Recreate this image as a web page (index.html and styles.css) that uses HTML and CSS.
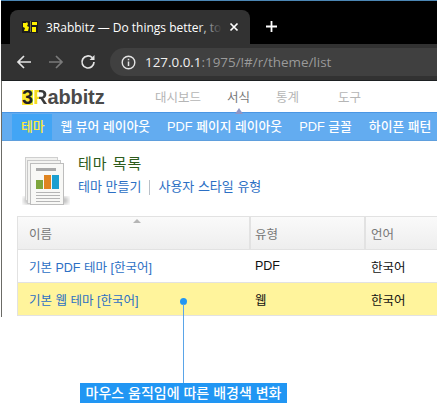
FILE: index.html
```html
<!DOCTYPE html>
<html lang="ko">
<head>
  <meta charset="UTF-8">
  <title>테마 목록</title>
  <link rel="stylesheet" href="styles.css">
</head>
<body>
  <div class="browser">
    <div class="tabstrip">
      <div class="tab">
        <svg class="favicon" width="16" height="12" viewBox="0 0 16 12">
          <rect x="0" y="0" width="16" height="12" fill="#1c1c1c"/>
          <path d="M1 2h3l1-1 1 2-1 2 2 1-1 4H2l1-3-2-1z" fill="#fff200"/>
          <rect x="8" y="0" width="1" height="11" fill="#77774a"/>
          <rect x="10" y="1" width="5" height="3" fill="#fff200"/>
          <rect x="10" y="6" width="4" height="5" fill="#fff200"/>
        </svg>
        <span class="tab-title">3Rabbitz — Do things better, to</span>
        <svg class="tab-close" width="10" height="10" viewBox="0 0 10 10">
          <path d="M1.500 1.500l7 7M8.500 1.500l-7 7" stroke="#fff" stroke-width="1.700" fill="none"/>
        </svg>
      </div>
      <svg class="new-tab" width="13" height="13" viewBox="0 0 13 13">
        <path d="M6.500 1v11M1 6.500h11" stroke="#fff" stroke-width="1.800" fill="none"/>
      </svg>
    </div>
    <div class="toolbar">
      <svg class="tool-icon" width="16" height="16" viewBox="0 0 16 16">
        <path d="M15 8H2M8 2L2 8l6 6" stroke="#e4e4e4" stroke-width="1.700" fill="none"/>
      </svg>
      <svg class="tool-icon" width="16" height="16" viewBox="0 0 16 16">
        <path d="M1 8h13M8 2l6 6-6 6" stroke="#7a7a7a" stroke-width="1.700" fill="none"/>
      </svg>
      <svg class="tool-icon" width="16" height="16" viewBox="0 0 16 16">
        <path d="M14 8a6 6 0 1 1-1.800-4.300" stroke="#e4e4e4" stroke-width="1.700" fill="none"/>
        <path d="M14.500 1v5h-5z" fill="#e4e4e4"/>
      </svg>
      <div class="omnibox">
        <svg class="info-icon" width="15" height="15" viewBox="0 0 15 15">
          <circle cx="7.500" cy="7.500" r="6.300" stroke="#e4e4e4" stroke-width="1.400" fill="none"/>
          <path d="M7.500 6.500v4.500M7.500 3.800v1.500" stroke="#e4e4e4" stroke-width="1.500" fill="none"/>
        </svg>
        <span class="url-host">127.0.0.1</span><span class="url-rest">:1975/!#/r/theme/list</span>
      </div>
    </div>

    <div class="app">
      <div class="topbar">
        <div class="logo"><span class="logo-three">3</span><span class="logo-r">R</span>abbitz</div>
        <a class="top-menu">대시보드</a>
        <a class="top-menu active">서식</a>
        <a class="top-menu">통계</a>
        <a class="top-menu">도구</a>
      </div>
      <div class="subnav">
        <a class="subnav-item active">테마</a>
        <a class="subnav-item">웹 뷰어 레이아웃</a>
        <a class="subnav-item">PDF 페이지 레이아웃</a>
        <a class="subnav-item">PDF 글꼴</a>
        <a class="subnav-item">하이픈 패턴</a>
      </div>
      <div class="page-head">
        <svg class="page-icon" width="48" height="52" viewBox="0 0 48 52">
          <defs>
            <filter id="soft"><feGaussianBlur stdDeviation="2"/></filter>
          </defs>
          <rect x="2" y="42" width="44" height="7" fill="#bbb" filter="url(#soft)"/>
          <rect x="3.500" y="2.500" width="32" height="43" fill="#f1f1ef" stroke="#cfcfcf"/>
          <rect x="5.500" y="5.500" width="33" height="43" fill="#f3f3f1" stroke="#c8c8c8"/>
          <rect x="8.500" y="8.500" width="33" height="41" fill="#f8f8f6" stroke="#bdbdbd"/>
          <rect x="14" y="13" width="20" height="3" fill="#a9a9a9"/>
          <rect x="14" y="25" width="7" height="9" fill="#7ea63d"/>
          <rect x="22" y="20" width="7" height="14" fill="#df8420"/>
          <rect x="30" y="20" width="7" height="14" fill="#1c9fd0"/>
          <path d="M14 37.500h24M14 40.500h24M14 43.500h24M14 46.500h24" stroke="#b5b5b5"/>
        </svg>
        <div class="page-info">
          <h1 class="page-title">테마 목록</h1>
          <div class="page-links">
            <a>테마 만들기</a>
            <span class="link-sep"></span>
            <a>사용자 스타일 유형</a>
          </div>
        </div>
      </div>
      <div class="theme-table">
        <div class="table-row table-head">
          <div class="cell name sorted">이름</div>
          <div class="cell type">유형</div>
          <div class="cell lang">언어</div>
        </div>
        <div class="table-row">
          <div class="cell name"><a>기본 PDF 테마 [한국어]</a></div>
          <div class="cell type">PDF</div>
          <div class="cell lang">한국어</div>
        </div>
        <div class="table-row hover">
          <div class="cell name"><a>기본 웹 테마 [한국어]</a></div>
          <div class="cell type">웹</div>
          <div class="cell lang">한국어</div>
        </div>
      </div>
    </div>

    <div class="callout-dot"></div>
    <div class="callout-line"></div>
    <div class="callout-label">마우스 움직임에 따른 배경색 변화</div>
  </div>
</body>
</html>
```

FILE: styles.css
```css
* {
  box-sizing: border-box;
}

html, body {
  margin: 0;
  padding: 0;
  background-color: white;
}

body {
  font-family: "Liberation Sans", "Noto Sans CJK KR", sans-serif;
  font-size: 12px;
  width: 437px;
  height: 403px;
  overflow: hidden;
}

.browser {
  position: relative;
  width: 437px;
  height: 403px;
  overflow: hidden;
}

.tabstrip {
  height: 44px;
  margin-left: 1px;
  background-color: #000;
  border-top: 1px solid #4b86b4;
  padding: 9px 0 0 9px;
  display: flex;
  align-items: flex-start;
}

.tab {
  width: 240px;
  height: 34px;
  background-color: #323232;
  border-radius: 8px 8px 0 0;
  display: flex;
  align-items: center;
  padding: 0 0 0 12px;
  color: #fff;
  font-family: "Open Sans", "Liberation Sans", sans-serif;
  font-size: 12px;
}

.favicon {
  flex: none;
}

.tab-title {
  position: relative;
  margin-left: 8px;
  width: 176px;
  white-space: nowrap;
  overflow: hidden;
}

.tab-title::after {
  content: "";
  position: absolute;
  right: 0;
  top: 0;
  width: 24px;
  height: 100%;
  background: linear-gradient(to right, rgba(50, 50, 50, 0), #323232);
}

.tab-close {
  margin-left: 7px;
  flex: none;
}

.new-tab {
  margin: 10px 0 0 15px;
}

.toolbar {
  height: 36px;
  margin-left: 1px;
  background-color: #323232;
  display: flex;
  align-items: center;
  padding: 0 0 0 15px;
  gap: 16px;
}

.tool-icon {
  flex: none;
}

.omnibox {
  flex: 1;
  height: 28px;
  margin-left: -2px;
  background-color: #404040;
  border-radius: 14px 0 0 14px;
  display: flex;
  align-items: center;
  padding-left: 11px;
  font-family: "Open Sans", "Liberation Sans", sans-serif;
  font-size: 13.4px;
}

.info-icon {
  margin-right: 9px;
}

.url-host {
  color: #f0f0f0;
}

.url-rest {
  color: #9a9a9a;
}

.app {
  height: 237px;
  margin-left: 1px;
  border-left: 1px solid #6b6b66;
  border-top: 1px solid #1d2022;
}

.topbar {
  height: 31px;
  display: flex;
  align-items: center;
  position: relative;
}

.logo {
  font-family: "Liberation Sans", sans-serif;
  font-weight: bold;
  font-size: 20px;
  color: #4a4a4a;
  margin: 1px 0 0 20px;
  width: 133px;
  letter-spacing: -0.1px;
}

.logo-three {
  background: linear-gradient(to bottom, #ffe92e, #ffe92e) no-repeat 0 4px / 100% 15px;
  color: #222;
}

.logo-r {
  background: linear-gradient(to right, #f5dc20 45%, #3a3a3a 45%);
  -webkit-background-clip: text;
  background-clip: text;
  color: transparent;
}

.top-menu {
  color: #b5b5b5;
  font-size: 12.5px;
  width: 52px;
}

.top-menu:nth-child(2) {
  width: 72px;
}

.top-menu:nth-child(4) {
  width: 62px;
}

.top-menu.active {
  color: #777;
  position: relative;
  width: 49px;
}

.top-menu.active::after {
  content: "";
  position: absolute;
  left: 8px;
  bottom: -8px;
  border: 4px solid transparent;
  border-top: 0;
  border-bottom: 6px solid #8f95c4;
}

.subnav {
  height: 29px;
  background-color: #63acf0;
  border-top: 1px solid #4a96e4;
  border-bottom: 1px solid #5f9fdd;
  padding: 1px 0 0 10px;
  display: flex;
  white-space: nowrap;
  overflow: hidden;
}

.subnav-item {
  color: #fff;
  font-size: 12.8px;
  font-weight: 500;
  line-height: 26px;
  padding: 0 8.500px;
}

.subnav-item.active {
  background-color: #42a5f5;
  color: #ffeb3b;
  padding: 0 9px;
  width: 40px;
}

.page-head {
  height: 75px;
  display: flex;
  padding: 14px 0 0 20px;
}

.page-icon {
  flex: none;
}

.page-info {
  margin: -1px 0 0 8px;
}

.page-title {
  margin: 1px 0 -1px;
  font-size: 15px;
  font-weight: 400;
  line-height: 18px;
  color: #2e5c1c;
  letter-spacing: 1px;
}

.page-links {
  margin-top: 6px;
  display: flex;
  align-items: center;
  font-size: 13px;
  color: #2c6fc4;
  line-height: 18px;
}

.link-sep {
  width: 1px;
  height: 15px;
  background-color: #b9c0c8;
  margin: 0 8px;
}

.theme-table {
  margin-left: 15px;
  border-top: 1px solid #e2e2e2;
  border-left: 1px solid #e2e2e2;
}

.table-row {
  height: 33px;
  display: flex;
  align-items: center;
  border-bottom: 1px solid #e2e2e2;
  color: #111;
  font-size: 12.5px;
}

.table-head {
  background: linear-gradient(#fafafa, #eeeeee);
  color: #777;
}

.cell {
  height: 100%;
  display: flex;
  align-items: center;
  padding-left: 11px;
  flex: none;
}

.cell.name {
  width: 233px;
  position: relative;
}

.cell.type {
  width: 115px;
  padding-left: 4px;
}

.cell.lang {
  width: 71px;
  padding-left: 5px;
}

.table-head .cell.name,
.table-head .cell.type {
  border-right: 2px solid #e2e2e2;
}

.cell.sorted::before {
  content: "";
  position: absolute;
  left: 115px;
  top: 2px;
  border: 4px solid transparent;
  border-top: 0;
  border-bottom: 4px solid #b5b5b5;
}

.cell a {
  color: #2c6fc4;
}

.hover {
  background-color: #fff49c;
}

.callout-dot {
  position: absolute;
  left: 180px;
  top: 298px;
  width: 7px;
  height: 7px;
  border-radius: 50%;
  background-color: #2196f3;
}

.callout-line {
  position: absolute;
  left: 183px;
  top: 304px;
  width: 1px;
  height: 79px;
  background-color: #5aa5e8;
}

.callout-label {
  position: absolute;
  left: 80px;
  top: 383px;
  width: 207px;
  height: 20px;
  background-color: #2196f3;
  color: #fff;
  font-size: 14px;
  font-weight: 500;
  line-height: 20px;
  text-align: center;
  white-space: nowrap;
}
```
